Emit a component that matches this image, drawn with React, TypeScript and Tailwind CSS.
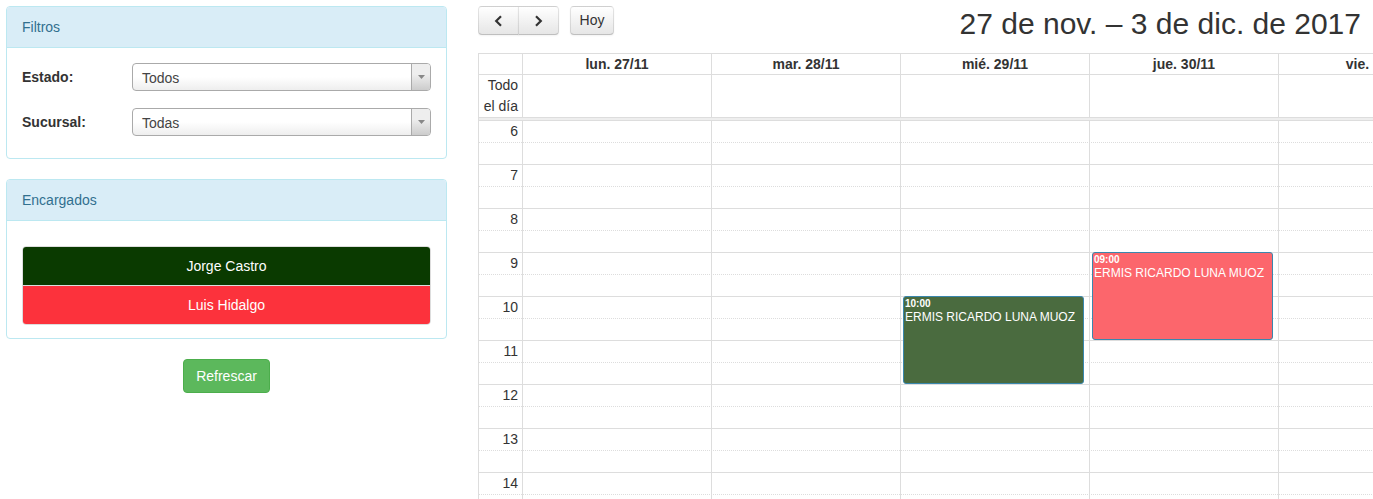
import React from "react";

const days = ["lun. 27/11", "mar. 28/11", "mié. 29/11", "jue. 30/11", "vie. 1/12", "sáb. 2/12", "dom. 3/12"];
const hours = [6, 7, 8, 9, 10, 11, 12, 13, 14, 15];

function Select({ value }: { value: string }) {
  return (
    <div className="flex-1 h-[28px] border border-[#aaa] rounded-[4px] bg-linear-to-t from-[#eeeeee] to-white to-50% flex items-center text-[#444] overflow-hidden">
      <span className="pl-[9px] pt-[2px] flex-1 leading-[26px]">{value}</span>
      <div className="w-[19px] h-full border-l border-[#aaa] bg-linear-to-t from-[#cccccc] to-[#eeeeee] to-60% flex items-center justify-center">
        <svg width="7" height="4" viewBox="0 0 7 4">
          <path d="M0 0h7L3.5 4z" fill="#888" />
        </svg>
      </div>
    </div>
  );
}

function FcButton({ children, className }: { children: React.ReactNode; className: string }) {
  return (
    <button
      className={
        "h-[29px] border border-black/10 border-b-black/25 bg-linear-to-b from-white to-[#e6e6e6] shadow-[inset_0_1px_0_rgba(255,255,255,0.2),0_1px_2px_rgba(0,0,0,0.05)] flex items-center justify-center text-[#333] text-[14px] " +
        className
      }
    >
      {children}
    </button>
  );
}

function Event({ top, bg, time }: { top: number; bg: string; time: string }) {
  return (
    <div
      className={"absolute left-[2px] w-[181px] h-[88px] border border-[#3a87ad] rounded-[3px] text-white px-[1px] " + bg}
      style={{ top }}
    >
      <div className="text-[10px] font-bold leading-[12px] mt-[1px]">{time}</div>
      <div className="text-[12px] leading-[15px] whitespace-nowrap">ERMIS RICARDO LUNA MUOZ</div>
    </div>
  );
}

export default function App() {
  return (
    <div className="w-[1373px] h-[499px] overflow-hidden bg-white flex font-['Liberation_Sans',Arial,sans-serif] text-[14px] text-[#333]">
      {/* Left column */}
      <div className="w-[441px] ml-[6px] mt-[6px] shrink-0">
        <div className="border border-[#bce8f1] rounded-[4px] overflow-hidden">
          <div className="bg-[#d9edf7] text-[#31708f] px-[15px] py-[10px] leading-[20px] border-b border-[#bce8f1]">
            Filtros
          </div>
          <div className="px-[15px] pt-[15px] pb-[22px] flex flex-col gap-[17px]">
            <div className="flex items-center">
              <div className="w-[110px] font-bold pt-[1px]">Estado:</div>
              <Select value="Todos" />
            </div>
            <div className="flex items-center">
              <div className="w-[110px] font-bold pt-[1px]">Sucursal:</div>
              <Select value="Todas" />
            </div>
          </div>
        </div>

        <div className="mt-[20px] border border-[#bce8f1] rounded-[4px] overflow-hidden">
          <div className="bg-[#d9edf7] text-[#31708f] px-[15px] py-[10px] leading-[20px] border-b border-[#bce8f1]">
            Encargados
          </div>
          <div className="px-[15px] pt-[25px] pb-[13px]">
            <div className="rounded-[4px] border border-[#ddd] overflow-hidden text-white text-center">
              <div className="h-[38px] leading-[38px] bg-[#0a3a00]">Jorge Castro</div>
              <div className="h-[39px] leading-[38px] border-t border-[#ddd] bg-[#fc323c]">Luis Hidalgo</div>
            </div>
          </div>
        </div>

        <div className="flex justify-center mt-[20px]">
          <button className="h-[34px] px-[12px] bg-[#5cb85c] border border-[#4cae4c] rounded-[4px] text-white text-[14px]">
            Refrescar
          </button>
        </div>
      </div>

      {/* Calendar */}
      <div className="ml-[31px] flex-1 min-w-0 overflow-hidden">
        <div className="flex items-start justify-between mt-[6px] pr-[12px] mb-[13px]">
          <div className="flex items-start">
            <div className="flex">
              <FcButton className="w-[41px] rounded-l-[4px]">
                <svg width="9" height="12" viewBox="0 0 9 12">
                  <path d="M7 1.3L2.2 6L7 10.7" fill="none" stroke="#333" strokeWidth="2.2" />
                </svg>
              </FcButton>
              <FcButton className="w-[41px] -ml-px rounded-r-[4px]">
                <svg width="9" height="12" viewBox="0 0 9 12">
                  <path d="M2 1.3L6.8 6L2 10.7" fill="none" stroke="#333" strokeWidth="2.2" />
                </svg>
              </FcButton>
            </div>
            <FcButton className="ml-[11px] w-[44px] rounded-[4px]">Hoy</FcButton>
          </div>
          <h2 className="text-[30px] leading-[33px] mt-[1px] text-[#333] font-normal whitespace-nowrap">
            27 de nov. – 3 de dic. de 2017
          </h2>
        </div>

        <div className="w-[1367px] border border-[#ddd]">
          {/* header */}
          <div className="flex border-b border-[#ddd]">
            <div className="w-[44px] h-[20px] border-r border-[#ddd] shrink-0" />
            {days.map((d) => (
              <div key={d} className="w-[189px] h-[20px] border-r border-[#ddd] shrink-0 text-center font-bold leading-[20px]">
                {d}
              </div>
            ))}
          </div>
          {/* all day */}
          <div className="flex">
            <div className="w-[44px] h-[42px] border-r border-[#ddd] shrink-0 text-right pr-[4px] leading-[21px]">
              Todo
              <br />
              el día
            </div>
            {days.map((d) => (
              <div key={d} className="w-[189px] h-[42px] border-r border-[#ddd] shrink-0" />
            ))}
          </div>
          <div className="h-[4px] border-y border-[#ddd] bg-[#eee]" />
          {/* time grid */}
          <div className="relative">
            {hours.map((h) => (
              <React.Fragment key={h}>
                <div className="h-[22px] border-b border-dotted border-[#ddd] flex">
                  <div className="w-[43px] text-right pr-[4px] leading-[21px]">{h}</div>
                </div>
                <div className="h-[22px] border-b border-[#ddd]" />
              </React.Fragment>
            ))}
            <div className="absolute inset-0 flex">
              <div className="w-[44px] h-full border-r border-[#ddd] shrink-0" />
              {days.map((d, i) => (
                <div key={d} className="relative w-[189px] h-full border-r border-[#ddd] shrink-0">
                  {i === 2 && <Event top={175} bg="bg-[#4a6b3f]" time="10:00" />}
                  {i === 3 && <Event top={131} bg="bg-[#fc666c]" time="09:00" />}
                </div>
              ))}
            </div>
          </div>
        </div>
      </div>
    </div>
  );
}
